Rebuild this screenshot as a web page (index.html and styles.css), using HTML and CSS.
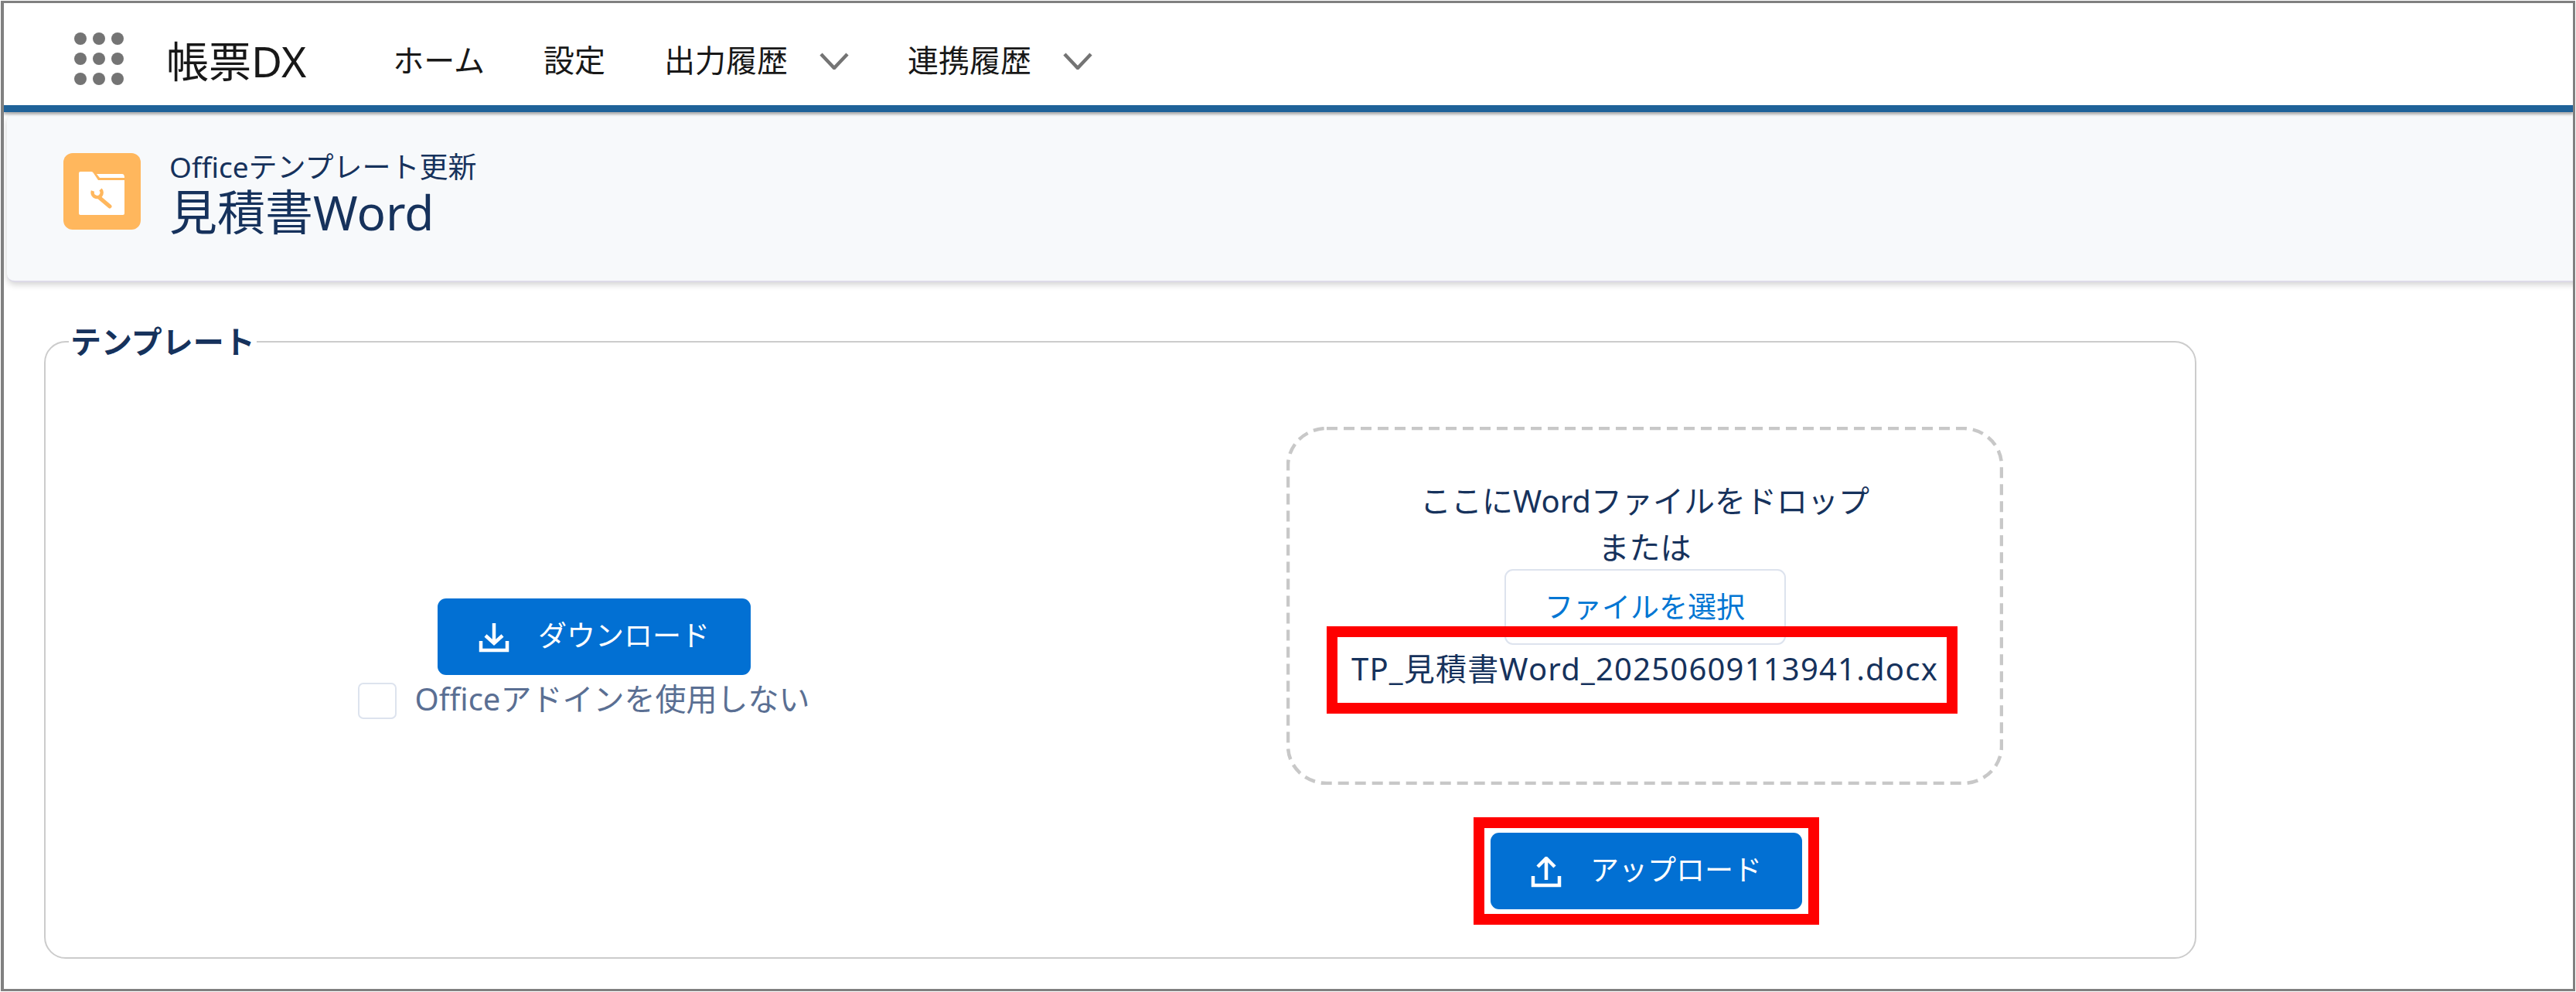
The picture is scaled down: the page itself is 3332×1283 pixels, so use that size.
FILE: index.html
```html
<!DOCTYPE html>
<html lang="ja">
<head>
  <meta charset="UTF-8">
  <title>帳票DX</title>
  <link rel="stylesheet" href="styles.css">
</head>
<body>
  <div class="frame">

    <!-- global nav -->
    <header class="nav-bar">
      <div class="launcher">
        <span class="dot"></span><span class="dot"></span><span class="dot"></span>
        <span class="dot"></span><span class="dot"></span><span class="dot"></span>
        <span class="dot"></span><span class="dot"></span><span class="dot"></span>
      </div>
      <div class="app-name">帳票DX</div>
      <nav class="nav-items">
        <a class="nav-item">ホーム</a>
        <a class="nav-item">設定</a>
        <a class="nav-item">出力履歴
          <svg class="chevron" viewBox="0 0 38 22"><path d="M2 2 L19 20 L36 2"/></svg>
        </a>
        <a class="nav-item">連携履歴
          <svg class="chevron" viewBox="0 0 38 22"><path d="M2 2 L19 20 L36 2"/></svg>
        </a>
      </nav>
    </header>

    <!-- page header -->
    <section class="page-head">
      <svg class="page-icon" viewBox="0 0 100 99">
        <rect width="100" height="99" rx="12" fill="#ffb75d"/>
        <path d="M20 26 Q20 24 22 24 H36 Q38 24 39 26 L45 35 H79 V78 Q79 80 77 80 H22 Q20 80 20 78 Z" fill="#fff"/>
        <path d="M43 27 H76 Q79 27 79 32 H47 Z" fill="#fff"/>
        <path d="M47 58 L60 69" stroke="#ffb75d" stroke-width="5" fill="none" stroke-linecap="round"/>
        <path d="M38 49 A6 6 0 1 0 48 47" stroke="#ffb75d" stroke-width="4.5" fill="none"/>
      </svg>
      <div class="page-titles">
        <div class="page-kicker">Officeテンプレート更新</div>
        <h1 class="page-title">見積書Word</h1>
      </div>
    </section>

    <!-- template -->
    <fieldset class="template">
      <legend class="template-label">テンプレート</legend>
      <div class="template-cols">
        <div class="col-download">
          <button class="btn">
            <svg class="btn-icon" viewBox="0 0 42 42"><path d="M21 1 V27 M10 17 L21 27 L32 17 M4 24 V36 H38 V24"/></svg>
            ダウンロード
          </button>
          <label class="option">
            <span class="checkbox"></span>
            Officeアドインを使用しない
          </label>
        </div>
        <div class="col-upload">
          <div class="dropzone">
            <svg class="dash" width="927" height="463"><rect x="2" y="2" width="923" height="459" rx="50" ry="48"/></svg>
            <div class="drop-text">ここにWordファイルをドロップ</div>
            <div class="drop-text">または</div>
            <button class="btn-select">ファイルを選択</button>
            <div class="file-name">TP_見積書Word_20250609113941.docx</div>
            <span class="mark mark-file"></span>
          </div>
          <div class="upload-wrap">
            <button class="btn">
              <svg class="btn-icon" viewBox="0 0 42 42"><path d="M21 30 V2 M10 13 L21 2 L32 13 M4 25 V37 H38 V25"/></svg>
              アップロード
            </button>
            <span class="mark mark-upload"></span>
          </div>
        </div>
      </div>
    </fieldset>

  </div>
</body>
</html>
```

FILE: styles.css
```css
* { box-sizing: border-box; }

body {
  margin: 0;
  background: #fff;
  font-family: "Noto Sans", "Noto Sans CJK JP", sans-serif;
  color: #16325c;
}

/* screenshot frame */
.frame {
  margin: 1px;
  width: 3330px;
  height: 1281px;
  border: 3px solid #808080;
  border-left-width: 4px;
  overflow: hidden;
  background: #fff;
}

/* ---- global nav ---- */
.nav-bar {
  display: flex;
  align-items: center;
  height: 141px;
  padding: 12px 0 0 91px;
  border-bottom: 9px solid #1f6299;
  box-shadow: 0 3px 3px rgba(0,0,0,0.3);
  position: relative;
}
.launcher {
  display: grid;
  grid-template-columns: repeat(3, 16px);
  grid-template-rows: repeat(3, 16px);
  gap: 10px 8px;
}
.dot { border-radius: 50%; background: #747474; }
.app-name {
  margin-left: 55px;
  font-size: 55px;
  color: #181818;
  white-space: nowrap;
}
.nav-items {
  display: flex;
  align-items: center;
  gap: 76px;
  margin-left: 112px;
}
.nav-item {
  display: flex;
  align-items: center;
  gap: 41px;
  font-size: 40px;
  color: #181818;
}
.chevron { width: 38px; height: 22px; margin-top: 6px; }
.chevron path { fill: none; stroke: #747474; stroke-width: 4.5; }

/* ---- page header ---- */
.page-head {
  display: flex;
  align-items: center;
  gap: 37px;
  height: 218px;
  margin: 2px -20px 0 4px;
  padding: 0 0 6px 73px;
  background: #f7f9fb;
  border-radius: 10px;
  border-bottom: 2px solid #dddbe8;
  box-shadow: 0 3px 8px rgba(0,0,0,0.18);
}
.page-icon { width: 100px; height: 99px; margin-top: -10px; }
.page-kicker { font-size: 37px; line-height: 44px; }
.page-title { margin: 0; font-size: 62px; line-height: 72px; font-weight: 400; }

/* ---- template ---- */
.template {
  width: 2784px;
  height: 818px;
  margin: 57px 0 0 52px;
  padding: 0 34px 0 30px;
  border: 2px solid #cccccc;
  border-radius: 28px;
}
.template-label {
  padding: 0 2px;
  font-size: 40px;
  line-height: 40px;
  font-weight: 700;
}
.template-cols {
  display: grid;
  grid-template-columns: 1fr 1fr;
  padding-top: 90px;
}
.col-download, .col-upload {
  display: flex;
  flex-direction: column;
  align-items: center;
}
.col-download { padding-top: 222px; }

.btn {
  display: flex;
  align-items: center;
  justify-content: center;
  gap: 36px;
  width: 405px;
  height: 99px;
  padding: 0 0 8px;
  background: #0270d3;
  color: #fff;
  border: none;
  border-radius: 11px;
  font: inherit;
  font-size: 37px;
}
.btn-icon { width: 42px; height: 42px; margin-top: 12px; }
.btn-icon path { fill: none; stroke: #fff; stroke-width: 4.5; }

.option {
  display: flex;
  align-items: center;
  gap: 24px;
  margin: 0 0 0 -26px;
  padding-bottom: 8px;
  font-size: 40px;
  color: #5a6f93;
  white-space: nowrap;
}
.checkbox {
  width: 50px;
  height: 47px;
  margin-top: 8px;
  background: #fff;
  border: 2px solid #dde3ee;
  border-radius: 7px;
}

.dropzone {
  position: relative;
  display: flex;
  flex-direction: column;
  align-items: center;
  width: 927px;
  height: 463px;
  margin-left: 3px;
  padding-top: 66px;
}
.dash { position: absolute; left: 0; top: 0; }
.dash rect { fill: none; stroke: #c8c8c8; stroke-width: 4.5; stroke-dasharray: 14 8; }
.drop-text { font-size: 40px; line-height: 60px; white-space: nowrap; }
.btn-select {
  width: 364px;
  height: 98px;
  margin-top: -2px;
  padding: 0 0 4px;
  background: #fff;
  border: 2px solid #dde3ee;
  border-radius: 11px;
  color: #0176d3;
  font: inherit;
  font-size: 37px;
}
.file-name {
  margin-top: 1px;
  font-size: 40px;
  line-height: 60px;
  letter-spacing: 1.2px;
  white-space: nowrap;
}

/* red annotation boxes */
.mark { position: absolute; border: 14px solid #ff0000; }
.mark-file { left: 52px; top: 258px; width: 816px; height: 113px; }
.mark-upload { left: -22px; right: -22px; top: -20px; bottom: -20px; }

.upload-wrap { position: relative; margin-top: 62px; left: 3px; }
.upload-wrap .btn { width: 403px; }
```
